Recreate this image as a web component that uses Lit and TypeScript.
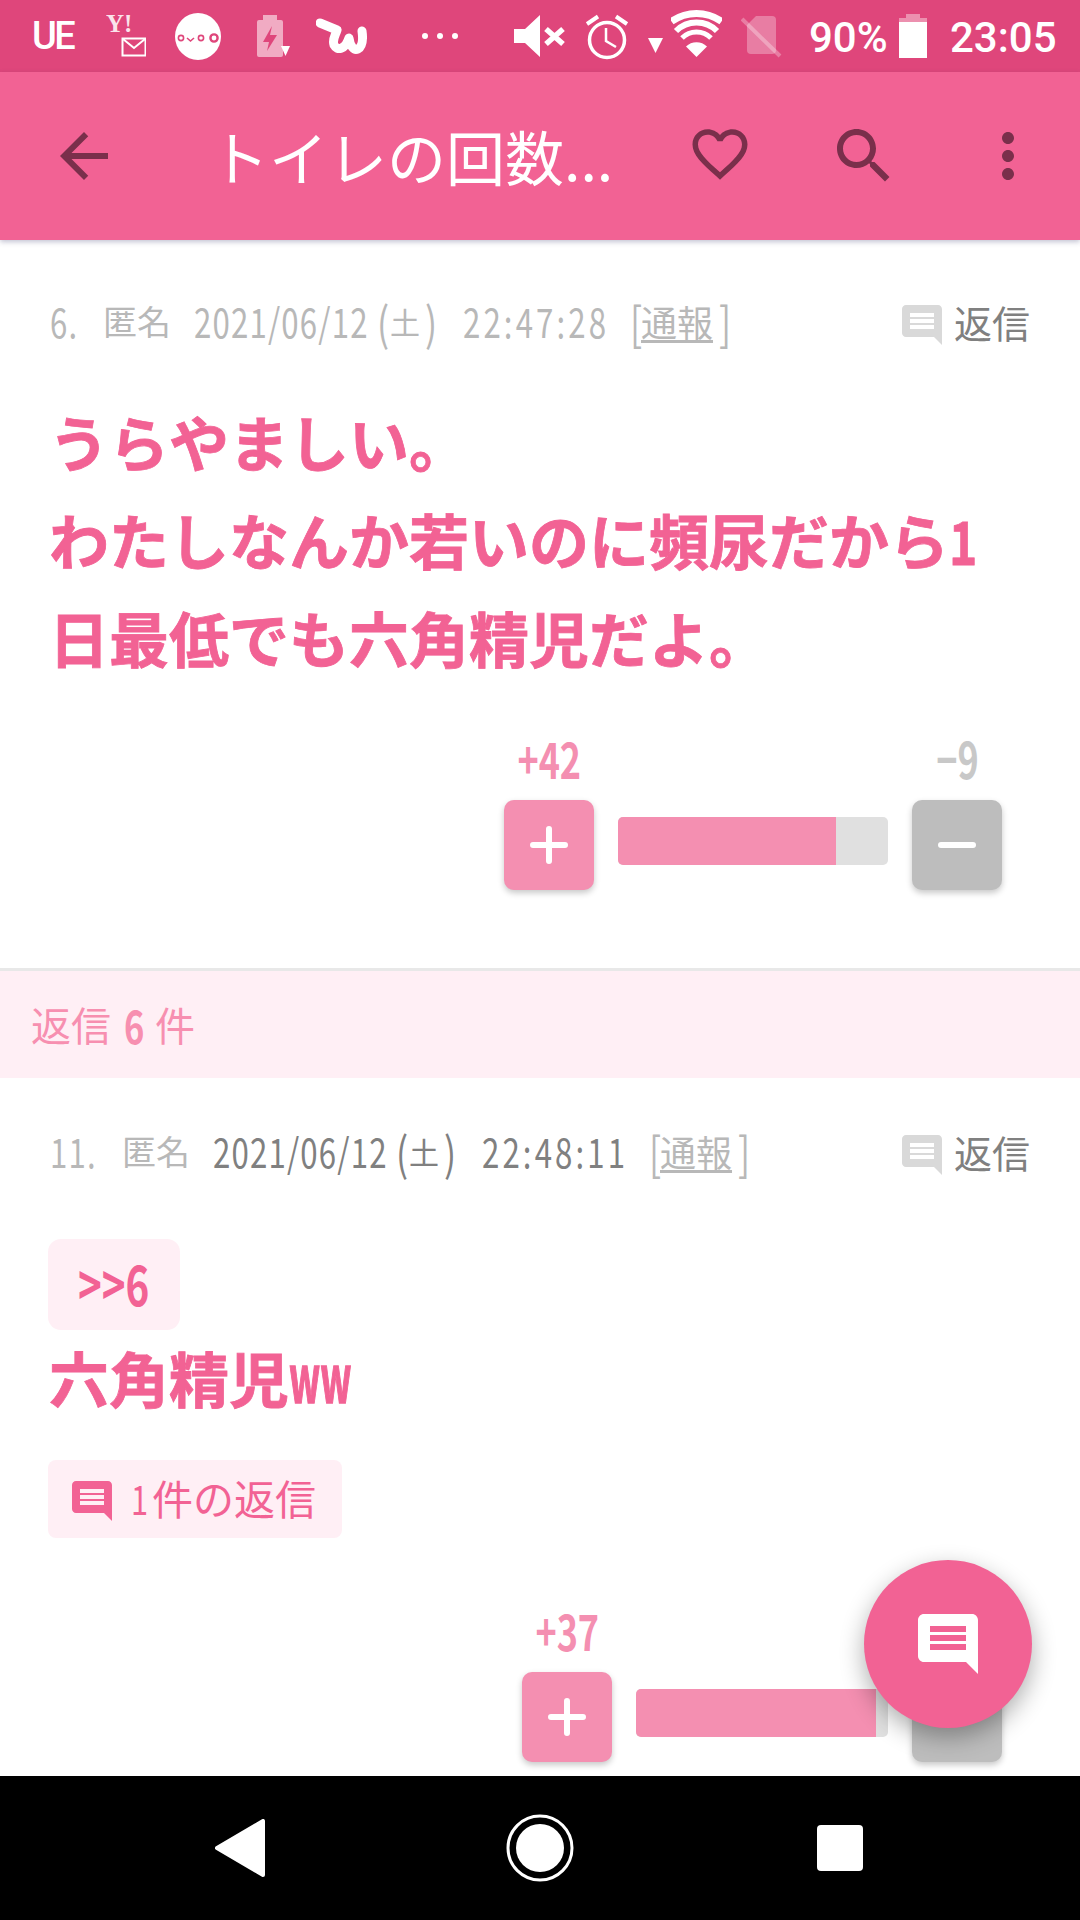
import { LitElement, html, css } from "lit";
import { customElement, property } from "lit/decorators.js";

const COMMENT = "M21.99 4c0-1.1-.89-2-1.99-2H4c-1.1 0-2 .9-2 2v12c0 1.1.9 2 2 2h14l4 4-.01-18zM18 14H6v-2h12v2zm0-3H6V9h12v2zm0-3H6V6h12v2z";

const commentIcon = () => html`<svg viewBox="0 0 24 24"><path fill="currentColor" d=${COMMENT}></path></svg>`;

@customElement("vote-row")
class VoteRow extends LitElement {
  @property({ type: Number }) up = 0;
  @property({ type: String }) down = "";
  @property({ type: Number }) fill = 0;
  @property({ type: Number }) track = 0;
  static styles = css`
    :host { display: flex; justify-content: flex-end; align-items: flex-start; gap: 24px; padding-right: 78px; }
    .col { width: 90px; display: flex; flex-direction: column; align-items: center; }
    .lab { height: 60px; margin-bottom: 10px; font: 700 50px/54px "Noto Sans CJK JP", sans-serif; white-space: nowrap; transform: scaleX(.72); }
    .lab.up { color: #f48fb1; }
    .lab.down { color: #c8c8c8; }
    .btn { width: 90px; height: 90px; border-radius: 10px; display: flex; align-items: center; justify-content: center; box-shadow: 0 3px 6px rgba(0,0,0,.22); }
    .btn.up { background: #f48fb1; }
    .btn.down { background: #bdbdbd; }
    .btn svg { width: 38px; height: 38px; }
    .bar { margin-top: 87px; height: 48px; background: #e0e0e0; border-radius: 5px; overflow: hidden; }
    .fill { height: 100%; background: #f48fb1; }
  `;
  render() {
    return html`
      <div class="col"><div class="lab up">+${this.up}</div>
        <div class="btn up"><svg viewBox="0 0 38 38"><path d="M3 19H35M19 3V35" stroke="#fff" stroke-width="6" stroke-linecap="round" fill="none"></path></svg></div></div>
      <div class="bar" style="width:${this.track}px"><div class="fill" style="width:${this.fill}px"></div></div>
      <div class="col"><div class="lab down">${this.down}</div>
        <div class="btn down"><svg viewBox="0 0 38 38"><path d="M3 19H35" stroke="#fff" stroke-width="6" stroke-linecap="round" fill="none"></path></svg></div></div>
    `;
  }
}

@customElement("app-root")
class AppRoot extends LitElement {
  static styles = css`
    :host { display: flex; flex-direction: column; position: relative; width: 1080px; height: 1920px; overflow: hidden; background: #fff; font-family: "Noto Sans CJK JP", "Noto Sans", sans-serif; }
    .status { flex: none; height: 72px; background: #df467b; display: flex; align-items: flex-start; color: #fff; }
    .status svg { display: block; height: 72px; flex: none; }
    .ue { font: 500 38px/72px Roboto, sans-serif; letter-spacing: -2.5px; margin-left: 32px; width: 74px; }
    .pct { font: 500 42px/76px Roboto, sans-serif; margin-left: 27px; width: 90px; }
    .time { font: 500 42px/76px Roboto, sans-serif; margin-left: 23px; }
    .g8 { margin-left: 8px; } .g19 { margin-left: 19px; } .g26 { margin-left: 26px; } .g29 { margin-left: 29px; }
    .g36 { margin-left: 36px; } .g55 { margin-left: 55px; } .g56 { margin-left: 56px; }

    .appbar { flex: none; height: 168px; background: #f26294; display: flex; align-items: center; padding-left: 48px; box-shadow: 0 2px 5px rgba(60,60,110,.3); position: relative; z-index: 2; }
    .appbar svg { width: 72px; height: 72px; flex: none; color: #7a2f4b; }
    .title { flex: 1; margin-left: 90px; color: #fff; font-size: 59px; line-height: 72px; white-space: nowrap; }
    .act { width: 144px; height: 72px; display: flex; justify-content: center; flex: none; }
    .act svg.heart { width: 66px; height: 66px; margin-top: 1px; }

    .main { flex: 1; overflow: hidden; min-height: 0; }
    .comment { padding-bottom: 78px; }
    .comment.first { padding-top: 51px; border-bottom: 3px solid #e8e8e8; }
    .comment.second { padding-top: 43px; }
    .meta { height: 60px; display: flex; align-items: center; padding: 0 50px; color: #b8b8b8; white-space: nowrap; }
    .lat { display: inline-block; flex: none; font-size: 40px; line-height: 60px; letter-spacing: 1.5px; transform: scaleX(.78); transform-origin: 0 50%; }
    .lat.wide { letter-spacing: 4px; }
    .paren { font-size: 46px; letter-spacing: 0; }
    .dark { color: #808080; }
    .cj { font-size: 34px; line-height: 60px; flex: none; }
    .tsu { font-size: 36px; text-decoration: underline; text-underline-offset: 3px; width: 78px; }
    .w-num1 { width: 53px; } .w-num2 { width: 72px; }
    .w-date { width: 183px; margin-left: 23px; }
    .w-open { width: 13px; }
    .do { font-size: 30px; width: 35px; }
    .w-close { width: 12px; }
    .w-time { width: 145px; margin-left: 26px; }
    .w-lb { width: 11px; margin-left: 22px; }
    .w-rb { width: 12px; }
    .reply { margin-left: auto; display: flex; align-items: center; color: #808080; font-size: 38px; }
    .reply svg { width: 48px; height: 48px; color: #d9d9d9; margin-right: 8px; position: relative; top: 4px; }

    .body { color: #f26294; font-weight: 700; font-size: 60px; line-height: 98px; padding-left: 49px; white-space: nowrap; -webkit-text-stroke: .8px #f26294; }
    .first .body { margin-top: 41px; }
    .one { display: inline-block; width: 24px; transform: scaleX(.8); transform-origin: 0 50%; }
    .ww { display: inline-block; width: 60px; font-size: 66px; -webkit-text-stroke: 1.5px #f26294; transform: scaleX(.55); transform-origin: 0 50%; }
    .first vote-row { margin-top: 44px; }
    .second vote-row { margin-top: 64px; }

    .band { height: 107px; background: #ffeff5; color: #f78fb0; font-size: 40px; line-height: 107px; padding-left: 31px; display: flex; }
    .band b { font-size: 46px; width: 21px; margin: 0 10px 0 13px; transform: scaleX(.75); transform-origin: 0 50%; }

    .quote { margin: 58px 0 0 48px; width: 132px; height: 91px; border-radius: 13px; background: #ffeff5; color: #f26294; display: flex; align-items: center; justify-content: center; font-weight: 700; font-size: 56px; line-height: 91px; }
    .quote span { transform: scaleX(.72); position: relative; top: -3px; }
    .second .body { margin-top: -5px; }
    .chip { margin: 34px 0 0 48px; width: 294px; height: 78px; border-radius: 8px; background: #ffeff5; color: #f26294; display: flex; align-items: center; font-size: 41px; padding: 0 0 5px 20px; box-sizing: border-box; white-space: nowrap; }
    .chip svg { width: 48px; height: 48px; margin-right: 15px; position: relative; top: 4px; flex: none; }
    .chip .c1 { display: inline-block; width: 21px; transform: scaleX(.75); transform-origin: 0 50%; }

    .fab { position: absolute; left: 864px; top: 1560px; width: 168px; height: 168px; border-radius: 50%; background: #f26294; box-shadow: 0 9px 24px rgba(0,0,0,.32); display: flex; align-items: center; justify-content: center; color: #fff; z-index: 3; }
    .fab svg { width: 72px; height: 72px; }

    .nav { flex: none; height: 144px; background: #000; display: flex; align-items: center; }
    .nav svg { display: block; flex: none; }
    .nav .back { margin-left: 215px; width: 50px; height: 58px; }
    .nav .home { margin-left: 241px; width: 68px; height: 68px; }
    .nav .sq { margin-left: 243px; width: 46px; height: 46px; background: #fff; border-radius: 4px; }
  `;

  private statusBar() {
    return html`<div class="status">
      <div class="ue">UE</div>
      <svg width="40" viewBox="106 0 40 72">
        <text x="106" y="32" font-family="Liberation Serif" font-weight="700" font-size="25" fill="#fff" opacity=".85">Y!</text>
        <rect x="122.500" y="38.500" width="23" height="17" fill="none" stroke="#fff" stroke-width="2"></rect>
        <path d="M123 39 134 48 145 39" fill="none" stroke="#fff" stroke-width="2"></path>
      </svg>
      <svg class="g29" width="46" viewBox="175 0 46 72">
        <ellipse cx="198" cy="36.500" rx="23" ry="23.500" fill="#fff"></ellipse>
        <circle cx="181" cy="38" r="2.600" fill="none" stroke="#df467b" stroke-width="1.600"></circle>
        <path d="M187 38 190.500 41 194 38" fill="none" stroke="#df467b" stroke-width="1.600"></path>
        <circle cx="201" cy="38" r="2.600" fill="none" stroke="#df467b" stroke-width="1.600"></circle>
        <circle cx="214" cy="38" r="3.600" fill="none" stroke="#df467b" stroke-width="2.400"></circle>
      </svg>
      <svg class="g36" width="33" viewBox="257 0 33 72">
        <path d="M263 15H277V20H281Q283 20 283 22V55Q283 57 281 57H259Q257 57 257 55V22Q257 20 259 20H263Z" fill="#fff" opacity=".55"></path>
        <path d="M272 26 263 42H269L267 51 277 35H270Z" fill="#df467b"></path>
        <path d="M281 46H290L285.500 56Z" fill="#fff"></path>
      </svg>
      <svg class="g26" width="51" viewBox="316 0 51 72">
        <path d="M320 23 337 30C335 36 332 40 334 45C337 51 345 50 349 38C350 46 354 51 358 49C363 46 363 38 362 31" fill="none" stroke="#fff" stroke-width="9" stroke-linecap="round" stroke-linejoin="round"></path>
      </svg>
      <svg class="g55" width="36" viewBox="422 0 36 72">
        <circle cx="425" cy="36" r="3" fill="#fff"></circle><circle cx="440" cy="36" r="3" fill="#fff"></circle><circle cx="455" cy="36" r="3" fill="#fff"></circle>
      </svg>
      <svg class="g56" width="52" viewBox="514 0 52 72">
        <path d="M514 29H525L540 15V57L525 43H514Z" fill="#fff"></path>
        <path d="M546 29 563 44M563 29 546 44" stroke="#fff" stroke-width="5.500" fill="none"></path>
      </svg>
      <svg class="g19" width="44" viewBox="585 0 44 72">
        <circle cx="607" cy="40" r="17.500" fill="none" stroke="#fff" stroke-width="3.500"></circle>
        <path d="M587 24 598 16.500M627 24 616 16.500" stroke="#fff" stroke-width="4" fill="none"></path>
        <path d="M606 28V41L616 47" stroke="#fff" stroke-width="2.500" fill="none"></path>
      </svg>
      <svg class="g19" width="15" viewBox="648 0 15 72"><path d="M648 38H663L655.500 53Z" fill="#fff"></path></svg>
      <svg class="g8" width="51" viewBox="671 0 51 72">
        <path d="M696.500 57 686 46.500A15 15 0 0 1 707 46.500Z" fill="#fff"></path>
        <path d="M682 38A20.500 20.500 0 0 1 711 38" fill="none" stroke="#fff" stroke-width="5"></path>
        <path d="M676 31A29 29 0 0 1 717 31" fill="none" stroke="#fff" stroke-width="6"></path>
        <path d="M671.500 21.500A43 43 0 0 1 721.500 21.500" fill="none" stroke="#fff" stroke-width="7"></path>
      </svg>
      <svg class="g19" width="41" viewBox="741 0 41 72">
        <path d="M756 16H772Q776 16 776 20V50Q776 54 772 54H751Q747 54 747 50V25Z" fill="#fff" opacity=".3"></path>
        <path d="M742 19 780 56" stroke="#fff" stroke-width="4" opacity=".3" fill="none"></path>
      </svg>
      <div class="pct">90%</div>
      <svg width="28" viewBox="899 0 28 72">
        <path d="M906 14H920V18H927V22H899V18H906Z" fill="#fff" opacity=".4"></path>
        <rect x="899" y="22" width="28" height="36" fill="#fff"></rect>
      </svg>
      <div class="time">23:05</div>
    </div>`;
  }

  private meta(num: string, numCls: string, time: string, dateCls: string) {
    return html`<div class="meta">
      <span class="lat ${numCls}">${num}</span><span class="cj">匿名</span>
      <span class="lat w-date ${dateCls}">2021/06/12</span><span class="lat paren w-open ${dateCls}">(</span><span class="cj do ${dateCls}">土</span><span class="lat paren w-close ${dateCls}">)</span>
      <span class="lat wide w-time ${dateCls}">${time}</span>
      <span class="lat paren w-lb">[</span><span class="cj tsu">通報</span><span class="lat paren w-rb">]</span>
      <span class="reply">${commentIcon()}返信</span>
    </div>`;
  }

  render() {
    return html`
      ${this.statusBar()}
      <div class="appbar">
        <svg viewBox="0 0 24 24"><path fill="currentColor" d="M20 11H7.830l5.590-5.590L12 4l-8 8 8 8 1.410-1.410L7.830 13H20v-2z"></path></svg>
        <div class="title">トイレの回数...</div>
        <div class="act"><svg class="heart" viewBox="0 0 24 24"><path fill="currentColor" d="M16.500 3c-1.740 0-3.410.81-4.500 2.090C10.910 3.810 9.240 3 7.500 3 4.420 3 2 5.420 2 8.500c0 3.780 3.400 6.860 8.550 11.540L12 21.350l1.450-1.320C18.600 15.360 22 12.280 22 8.500 22 5.420 19.580 3 16.500 3zm-4.400 15.550l-.1.100-.1-.1C7.140 14.240 4 11.390 4 8.500 4 6.500 5.500 5 7.500 5c1.540 0 3.040.99 3.570 2.360h1.870C13.460 5.990 14.960 5 16.500 5c2 0 3.500 1.500 3.500 3.500 0 2.890-3.140 5.740-7.900 10.050z"></path></svg></div>
        <div class="act"><svg viewBox="0 0 24 24"><path fill="currentColor" d="M15.500 14h-.79l-.28-.27C15.410 12.590 16 11.110 16 9.500 16 5.910 13.090 3 9.500 3S3 5.910 3 9.500 5.910 16 9.500 16c1.610 0 3.090-.59 4.230-1.570l.27.28v.79l5 4.990L20.490 19l-4.990-5zm-6 0C7.010 14 5 11.990 5 9.500S7.010 5 9.500 5 14 7.010 14 9.500 11.990 14 9.500 14z"></path></svg></div>
        <div class="act"><svg viewBox="0 0 24 24"><path fill="currentColor" d="M12 8c1.100 0 2-.9 2-2s-.9-2-2-2-2 .9-2 2 .9 2 2 2zm0 2c-1.100 0-2 .9-2 2s.9 2 2 2 2-.9 2-2-.9-2-2-2zm0 6c-1.100 0-2 .9-2 2s.9 2 2 2 2-.9 2-2-.9-2-2-2z"></path></svg></div>
      </div>
      <div class="main">
        <div class="comment first">
          ${this.meta("6.", "w-num1", "22:47:28", "")}
          <div class="body">うらやましい。<br>わたしなんか若いのに頻尿だから<span class="one">1</span><br>日最低でも六角精児だよ。</div>
          <vote-row up="42" down="−9" fill="218" track="270"></vote-row>
        </div>
        <div class="band">返信<b>6</b>件</div>
        <div class="comment second">
          ${this.meta("11.", "w-num2", "22:48:11", "dark")}
          <div class="quote"><span>&gt;&gt;6</span></div>
          <div class="body">六角精児<span class="ww">ww</span></div>
          <div class="chip">${commentIcon()}<span class="c1">1</span>件の返信</div>
          <vote-row up="37" down="−1" fill="240" track="252"></vote-row>
        </div>
      </div>
      <div class="fab">${commentIcon()}</div>
      <div class="nav">
        <svg class="back" viewBox="0 0 50 58"><path d="M48 2V56L2 29Z" fill="#fff" stroke="#fff" stroke-width="4" stroke-linejoin="round"></path></svg>
        <svg class="home" viewBox="0 0 68 68"><circle cx="34" cy="34" r="32" fill="none" stroke="#fff" stroke-width="3"></circle><circle cx="34" cy="34" r="24" fill="#fff"></circle></svg>
        <div class="sq"></div>
      </div>
    `;
  }
}
